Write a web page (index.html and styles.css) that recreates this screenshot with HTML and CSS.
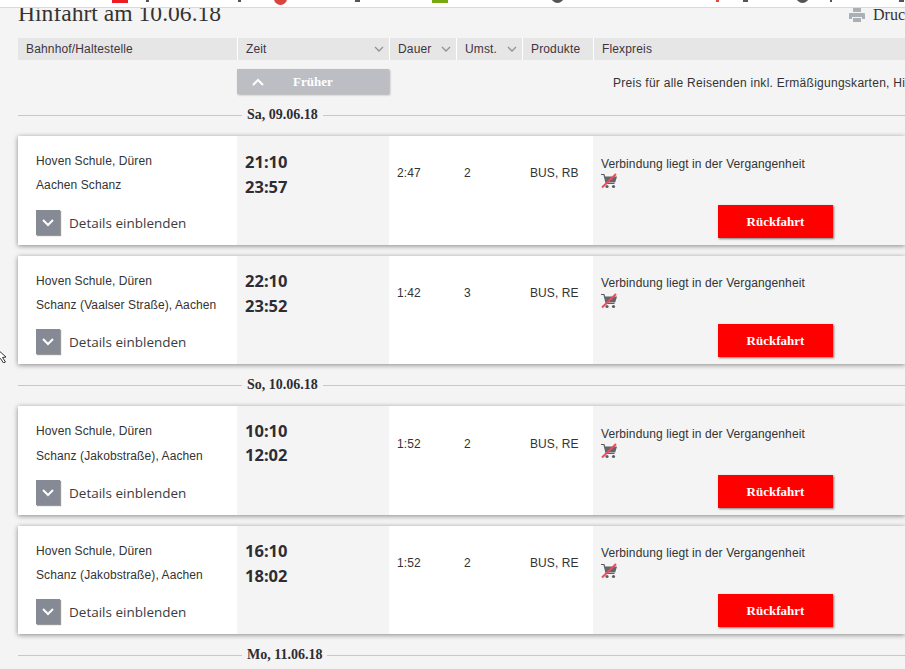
FILE: index.html
```html
<!DOCTYPE html>
<html lang="de">
<head>
<meta charset="utf-8">
<title>Hinfahrt am 10.06.18</title>
<link rel="stylesheet" href="styles.css">
</head>
<body>
<div class="bookmarks">
  <i class="mark mark-red"></i>
  <i class="mark tick d1"></i>
  <i class="mark tick d2"></i>
  <i class="mark mark-round"></i>
  <i class="mark tick d3"></i>
  <i class="mark mark-green"></i>
  <i class="mark mark-grey m1"></i>
  <i class="mark mark-dot"></i>
  <i class="mark tick d4"></i>
  <i class="mark mark-grey m2"></i>
  <i class="mark tick d5"></i>
  <i class="mark tick d6"></i>
</div>
<svg class="pointer" viewBox="0 0 10 14"><path d="M-3 0l9 8-3.500 .5 3 4.500-2 1-3-4.500-3.500 3z"/></svg>
<main class="page">
  <div class="title-row">
    <h1 class="title">Hinfahrt am 10.06.18</h1>
    <div class="print">
      <svg class="print-icon" viewBox="0 0 16 14" width="16" height="14"><path fill="#a9b0b6" d="M4 0h8v4H4zM1 5h14a1 1 0 0 1 1 1v5h-3V9H3v2H0V6a1 1 0 0 1 1-1zM4 10h8v4H4z"/></svg>
      <span>Drucken</span>
    </div>
  </div>
  <div class="grid head">
    <div class="th">Bahnhof/Haltestelle</div>
    <div class="th sort">Zeit<svg class="caret" viewBox="0 0 10 6"><path d="M1 1l4 4 4-4"/></svg></div>
    <div class="th sort">Dauer<svg class="caret" viewBox="0 0 10 6"><path d="M1 1l4 4 4-4"/></svg></div>
    <div class="th sort">Umst.<svg class="caret" viewBox="0 0 10 6"><path d="M1 1l4 4 4-4"/></svg></div>
    <div class="th">Produkte</div>
    <div class="th">Flexpreis</div>
  </div>
  <div class="grid earlier-row">
    <div></div>
    <button class="earlier"><svg class="up" viewBox="0 0 12 8"><path d="M1 7l5-5 5 5"/></svg><span>Früher</span></button>
    <p class="price-note">Preis für alle Reisenden inkl. Ermäßigungskarten, Hinweise</p>
  </div>

  <div class="day"><span>Sa, 09.06.18</span></div>
  <section class="conn">
    <div class="stops"><p>Hoven Schule, Düren</p><p>Aachen Schanz</p>
      <div class="details"><b class="toggle"><svg viewBox="0 0 12 8"><path d="M1 1l5 5 5-5"/></svg></b>Details einblenden</div></div>
    <div class="times"><p>21:10</p><p>23:57</p></div>
    <div class="cell">2:47</div><div class="cell">2</div><div class="cell">BUS, RB</div>
    <div class="fare"><p>Verbindung liegt in der Vergangenheit</p>
      <svg class="cart" viewBox="0 0 16 16"><path class="cart-handle" d="M0 1.500h3l2.200 9h8.300"/><path class="cart-body" d="M3.500 3.500H16l-1.800 6H5z"/><circle cx="6" cy="13.500" r="1.600"/><circle cx="12.500" cy="13.500" r="1.600"/><path class="cart-slash" d="M1 14.500L15 1"/></svg>
      <a class="return">Rückfahrt</a></div>
  </section>
  <section class="conn second">
    <div class="stops"><p>Hoven Schule, Düren</p><p>Schanz (Vaalser Straße), Aachen</p>
      <div class="details"><b class="toggle"><svg viewBox="0 0 12 8"><path d="M1 1l5 5 5-5"/></svg></b>Details einblenden</div></div>
    <div class="times"><p>22:10</p><p>23:52</p></div>
    <div class="cell">1:42</div><div class="cell">3</div><div class="cell">BUS, RE</div>
    <div class="fare"><p>Verbindung liegt in der Vergangenheit</p>
      <svg class="cart" viewBox="0 0 16 16"><path class="cart-handle" d="M0 1.500h3l2.200 9h8.300"/><path class="cart-body" d="M3.500 3.500H16l-1.800 6H5z"/><circle cx="6" cy="13.500" r="1.600"/><circle cx="12.500" cy="13.500" r="1.600"/><path class="cart-slash" d="M1 14.500L15 1"/></svg>
      <a class="return">Rückfahrt</a></div>
  </section>

  <div class="day"><span>So, 10.06.18</span></div>
  <section class="conn third">
    <div class="stops"><p>Hoven Schule, Düren</p><p>Schanz (Jakobstraße), Aachen</p>
      <div class="details"><b class="toggle"><svg viewBox="0 0 12 8"><path d="M1 1l5 5 5-5"/></svg></b>Details einblenden</div></div>
    <div class="times"><p>10:10</p><p>12:02</p></div>
    <div class="cell">1:52</div><div class="cell">2</div><div class="cell">BUS, RE</div>
    <div class="fare"><p>Verbindung liegt in der Vergangenheit</p>
      <svg class="cart" viewBox="0 0 16 16"><path class="cart-handle" d="M0 1.500h3l2.200 9h8.300"/><path class="cart-body" d="M3.500 3.500H16l-1.800 6H5z"/><circle cx="6" cy="13.500" r="1.600"/><circle cx="12.500" cy="13.500" r="1.600"/><path class="cart-slash" d="M1 14.500L15 1"/></svg>
      <a class="return">Rückfahrt</a></div>
  </section>
  <section class="conn second">
    <div class="stops"><p>Hoven Schule, Düren</p><p>Schanz (Jakobstraße), Aachen</p>
      <div class="details"><b class="toggle"><svg viewBox="0 0 12 8"><path d="M1 1l5 5 5-5"/></svg></b>Details einblenden</div></div>
    <div class="times"><p>16:10</p><p>18:02</p></div>
    <div class="cell">1:52</div><div class="cell">2</div><div class="cell">BUS, RE</div>
    <div class="fare"><p>Verbindung liegt in der Vergangenheit</p>
      <svg class="cart" viewBox="0 0 16 16"><path class="cart-handle" d="M0 1.500h3l2.200 9h8.300"/><path class="cart-body" d="M3.500 3.500H16l-1.800 6H5z"/><circle cx="6" cy="13.500" r="1.600"/><circle cx="12.500" cy="13.500" r="1.600"/><path class="cart-slash" d="M1 14.500L15 1"/></svg>
      <a class="return">Rückfahrt</a></div>
  </section>

  <div class="day"><span>Mo, 11.06.18</span></div>
</main>
</body>
</html>
```
FILE: styles.css
```css
* { box-sizing: border-box; }
html, body { margin: 0; height: 669px; overflow: hidden; }
body { background: #f4f4f4; color: #333; font-family: "Liberation Sans", Arial, sans-serif; font-size: 12px; letter-spacing: .1px; position: relative; }
p { margin: 0; }

.bookmarks { position: absolute; z-index: 2; top: 0; left: 0; width: 905px; height: 8px; background: #fff; border-bottom: 1px solid #d9d9d9; overflow: hidden; }
.mark { position: absolute; top: 0; height: 3px; }
.mark-red { left: 112px; width: 16px; background: #ed1c24; }
.mark-round { left: 274px; top: -8px; width: 13px; height: 13px; background: #d9453c; border-radius: 50%; }
.mark-green { left: 432px; width: 16px; background: #76a912; }
.mark-grey { top: -10px; width: 13px; height: 13px; background: #555; border-radius: 50%; }
.m1 { left: 551px; }
.m2 { left: 796px; }
.mark-dot { left: 716px; width: 3px; height: 2px; background: #e8453c; }
.tick { width: 3px; height: 2px; background: #555; }
.d1 { left: 146px; }
.d2 { left: 238px; }
.d3 { left: 355px; width: 5px; }
.d4 { left: 743px; width: 5px; }
.d5 { left: 830px; width: 2px; }
.d6 { left: 899px; width: 5px; }

.pointer { position: absolute; left: 0; top: 349px; width: 10px; height: 14px; }
.pointer path { fill: #fff; stroke: #333; stroke-width: 1; }

.page { width: 905px; padding-left: 18px; }
.title-row { height: 38px; display: flex; justify-content: space-between; align-items: flex-start; overflow: hidden; }
.title { margin: 0; font: 400 23.6px/26px "Liberation Serif", serif; letter-spacing: 0; color: #333; }
.print { display: flex; gap: 8px; align-items: center; margin-top: 7px; height: 16px; font: 16px "Liberation Serif", serif; letter-spacing: 0; width: 56px; flex: none; white-space: nowrap; overflow: hidden; }
.print-icon { flex: none; }

.grid { display: grid; grid-template-columns: 219px 152px 67px 66px 71px 1fr; }
.head { height: 22px; }
.th { background: #e6e6e6; padding-left: 8px; line-height: 22px; color: #40353f; letter-spacing: .15px; position: relative; border-left: 1px solid #fff; }
.th:first-child { border-left: 0; }
.caret { position: absolute; right: 5px; top: 8px; width: 10px; height: 6px; }
.caret path { fill: none; stroke: #8d9299; stroke-width: 1.3; }

.earlier-row { height: 49px; grid-template-columns: 219px 152px 1fr; }
.earlier { margin-top: 9px; height: 25px; border: 0; padding: 0; background: #bcbec3; color: #fff; font: 700 13px "Liberation Serif", serif; box-shadow: 1px 1px 2px rgba(0,0,0,.3); display: flex; align-items: center; }
.up { width: 12px; height: 8px; margin-left: 15px; }
.up path { fill: none; stroke: #fff; stroke-width: 2; }
.earlier span { margin-left: 29px; }
.price-note { white-space: nowrap; padding-left: 224px; margin-top: 15px; line-height: 16px; letter-spacing: .27px; }

.day { height: 12px; display: flex; align-items: center; }
.day::before { content: ""; width: 224px; height: 1px; background: #c8c8c8; flex: none; }
.day::after { content: ""; flex: 1; height: 1px; background: #c8c8c8; }
.day span { font: 700 14px/12px "Liberation Serif", serif; letter-spacing: 0; padding: 0 5px; color: #2d2d33; }

.conn { display: grid; grid-template-columns: 219px 152px 67px 66px 71px 1fr; height: 109px; background: #fff; margin-top: 15px; box-shadow: 0 1px 5px rgba(0,0,0,.45); }
.conn.second { height: 108px; margin-top: 11px; margin-bottom: 15px; }
.stops { padding: 18px 0 0 18px; }
.stops p { line-height: 14px; height: 24px; white-space: nowrap; }
.third .stops p + p { padding-top: 1px; }
.details { display: flex; align-items: center; gap: 9px; margin-top: 8px; line-height: 24px; color: #3b3b40; font-family: "Open Sans", sans-serif; font-size: 13.5px; letter-spacing: 0; }
.second .details { margin-top: 7px; }
.toggle { width: 24px; height: 25px; background: #868a95; box-shadow: 1px 1px 1px rgba(0,0,0,.4); display: flex; align-items: center; justify-content: center; }
.toggle svg { width: 12px; height: 8px; }
.toggle path { fill: none; stroke: #fff; stroke-width: 2; }
.times { background: #f4f4f4; padding: 13px 0 0 8px; font: 700 16.5px/25px "Noto Sans", sans-serif; letter-spacing: 0; color: #2d2d33; }
.second .times { padding-top: 12px; }
.third .times { line-height: 24px; }
.cell { padding: 29px 0 0 8px; line-height: 16px; }
.third .cell { padding-top: 30px; }
.fare { background: #f4f4f4; padding: 21px 0 0 8px; position: relative; }
.second .fare { padding-top: 20px; }
.fare p { line-height: 15px; white-space: nowrap; }
.cart { display: block; width: 16px; height: 16px; margin-top: 1px; }
.second .cart { margin-top: 2px; }
.cart circle { fill: #5a6066; }
.cart-handle { fill: none; stroke: #5a6066; stroke-width: 1.2; }
.cart-body { fill: #5f666d; }
.cart-slash { stroke: #e5505c; stroke-width: 2; }
.return { position: absolute; left: 125px; top: 69px; width: 115px; height: 33px; background: #f00; color: #fff; font: 700 13px/33px "Liberation Serif", serif; letter-spacing: 0; text-align: center; box-shadow: 1px 1px 2px rgba(0,0,0,.5); }
.second .return { top: 68px; }
```
